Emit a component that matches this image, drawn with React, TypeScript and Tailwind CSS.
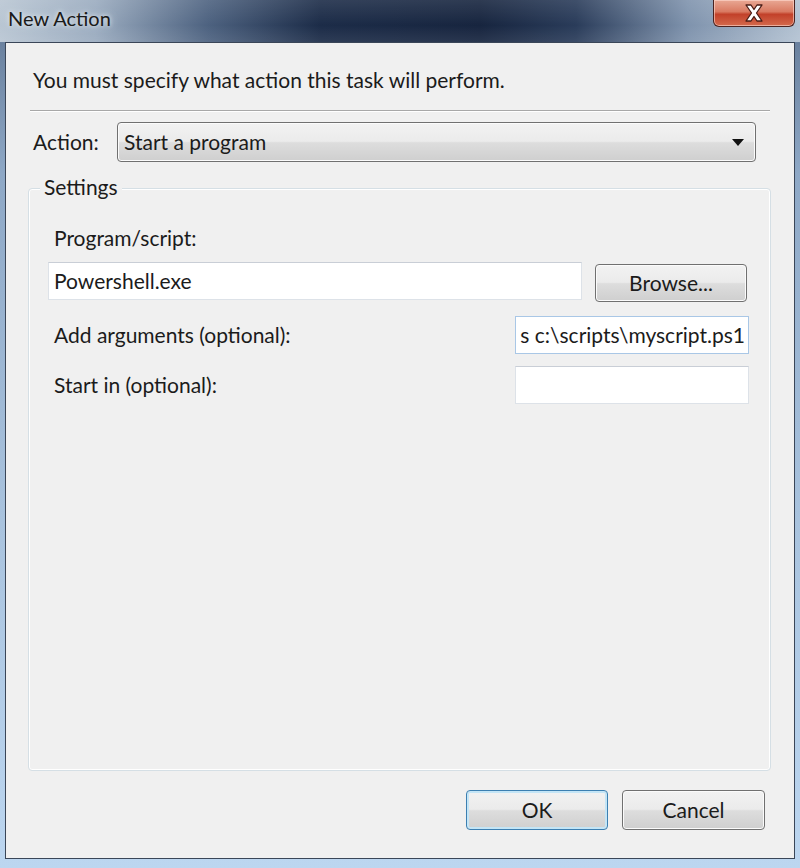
import React from "react";

const font = { fontFamily: "Lato, 'Noto Sans', sans-serif" };

function Win7Button({ children, className = "", def = false }: { children: React.ReactNode; className?: string; def?: boolean }) {
  return (
    <div
      className={
        "flex items-center justify-center rounded-[4px] border text-[21px] text-[#1b1b1b] " +
        (def
          ? "border-[#3c7fb1] shadow-[inset_0_0_0_2px_#c4e5f6] bg-[linear-gradient(180deg,#f2f2f2_0%,#ebebeb_48%,#dddddd_52%,#cfcfcf_100%)] "
          : "border-[#707070] shadow-[inset_0_0_0_1px_#fbfbfb] bg-[linear-gradient(180deg,#f2f2f2_0%,#ebebeb_48%,#dddddd_52%,#cfcfcf_100%)] ") +
        className
      }
    >
      {children}
    </div>
  );
}

export default function App() {
  return (
    <div
      className="w-[800px] h-[868px] flex flex-col overflow-hidden bg-[linear-gradient(180deg,#5f7592_0%,#8ea8c6_20%,#a9c3de_60%,#bcd6f0_100%)]"
      style={font}
    >
      {/* Title bar */}
      <div className="relative h-[42px] shrink-0 bg-[linear-gradient(90deg,#b9c6d3_0%,#9aabbf_12%,#4d6280_26%,#1c2c48_40%,#17253f_60%,#2a3c5a_72%,#7f93ad_86%,#b3c2d2_100%)]">
        <div className="absolute inset-0 bg-[linear-gradient(180deg,rgba(255,255,255,0.10)_0%,rgba(255,255,255,0)_60%,rgba(255,255,255,0.08)_100%)]" />
        <div className="relative flex h-full items-start justify-between">
          <div className="ml-[6px] mt-[4px] rounded-[12px] px-[2px] text-[20px] leading-[28px] text-[#1a1a1a] [text-shadow:0_0_8px_#d8e0e8,0_0_4px_#e4eaf0]">
            New Action
          </div>
          <div className="mr-[5px] flex h-[27px] w-[82px] items-center justify-center rounded-b-[6px] border border-t-0 border-[#4b2320] bg-[linear-gradient(180deg,#e9a894_0%,#d97a62_45%,#c2412a_55%,#d46a4c_100%)] shadow-[inset_0_0_0_1px_rgba(255,220,210,0.6)]">
            <svg width="22" height="20" viewBox="0 0 22 20" className="mb-[1px]">
              <path
                d="M3 2 H8 L11 6.5 L14 2 H19 L13.5 10 L19 18 H14 L11 13.5 L8 18 H3 L8.5 10 Z"
                fill="#ffffff"
                stroke="#4a1d16"
                strokeWidth="1.3"
                strokeLinejoin="round"
              />
            </svg>
          </div>
        </div>
      </div>

      {/* Content panel */}
      <div className="mx-[5px] mb-[9px] flex flex-1 flex-col border border-[#3a4658] bg-[#f0f0f0] text-[21px] text-[#1b1b1b]">
        <div className="ml-[27px] mt-[25px] h-[24px] leading-[24px]">You must specify what action this task will perform.</div>
        <div className="mx-[24px] mt-[18px] h-[2px] border-t border-b border-t-[#a8a8a8] border-b-[#ffffff]" />

        {/* Action row */}
        <div className="mt-[10px] flex h-[40px] items-center">
          <div className="ml-[27px] w-[84px]">Action:</div>
          <div className="flex h-[40px] w-[639px] items-center justify-between rounded-[4px] border border-[#707070] bg-[linear-gradient(180deg,#f2f2f2_0%,#ebebeb_48%,#dddddd_52%,#cfcfcf_100%)] shadow-[inset_0_0_0_1px_#fbfbfb] pl-[6px] pr-[10px]">
            <span>Start a program</span>
            <svg width="14" height="9" viewBox="0 0 14 9">
              <path d="M1 1 H13 L7 8 Z" fill="#111" />
            </svg>
          </div>
        </div>

        {/* Settings group */}
        <div className="relative ml-[22px] mr-[23px] mt-[26px] h-[583px] rounded-[4px] border border-[#d5dfe5] shadow-[inset_0_0_0_1px_#ffffff]">
          <div className="absolute -top-[14px] left-[11px] bg-[#f0f0f0] px-[4px] leading-[24px]">Settings</div>
          <div className="flex flex-col pl-[19px] pr-[21px]">
            <div className="ml-[6px] mt-[37px] h-[24px] leading-[24px]">Program/script:</div>
            <div className="mt-[12px] flex items-start">
              <div className="flex h-[38px] w-[534px] items-center border border-[#dde2e8] border-t-[#c9ced6] bg-white pl-[5px]">
                Powershell.exe
              </div>
              <Win7Button className="ml-[13px] mt-[2px] h-[38px] w-[152px]">Browse...</Win7Button>
            </div>
            <div className="mt-[14px] flex items-center justify-between">
              <div className="ml-[6px]">Add arguments (optional):</div>
              <div className="flex h-[38px] w-[234px] items-center justify-end whitespace-nowrap border border-[#a9c7e6] bg-white pr-[3px]">
                s c:\scripts\myscript.ps1
              </div>
            </div>
            <div className="mt-[12px] flex items-center justify-between">
              <div className="ml-[6px]">Start in (optional):</div>
              <div className="h-[38px] w-[234px] border border-[#dde2e8] border-t-[#c9ced6] bg-white" />
            </div>
          </div>
        </div>

        {/* Buttons */}
        <div className="mr-[29px] mt-[19px] flex justify-end gap-[14px]">
          <Win7Button def className="h-[40px] w-[142px]">OK</Win7Button>
          <Win7Button className="h-[40px] w-[143px]">Cancel</Win7Button>
        </div>
      </div>
    </div>
  );
}
